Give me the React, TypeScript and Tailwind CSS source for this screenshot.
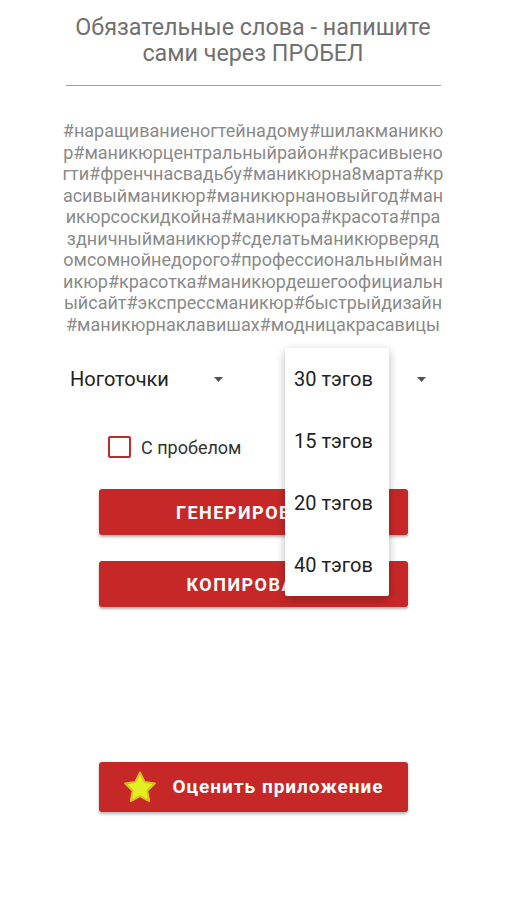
const HASHTAG_LINES = [
  "#наращиваниеногтейнадому#шилакманикю",
  "р#маникюрцентральныйрайон#красивыено",
  "гти#френчнасвадьбу#маникюрна8марта#кр",
  "асивыйманикюр#маникюрнановыйгод#ман",
  "икюрсоскидкойна#маникюра#красота#пра",
  "здничныйманикюр#сделатьманикюрверяд",
  "омсомнойнедорого#профессиональныйман",
  "икюр#красотка#маникюрдешегоофициальн",
  "ыйсайт#экспрессманикюр#быстрыйдизайн",
  "#маникюрнаклавишах#модницакрасавицы",
];

const OPTIONS = ["30 тэгов", "15 тэгов", "20 тэгов", "40 тэгов"];

function Caret() {
  return (
    <svg width="9" height="5" viewBox="0 0 9 5" className="shrink-0">
      <path d="M0 0h9L4.5 5z" fill="#555" />
    </svg>
  );
}

function Star() {
  return (
    <svg width="36" height="34" viewBox="0 0 36 34">
      <path
        d="M18 2.5l4.6 9.4 10.3 1.5-7.5 7.3 1.8 10.3L18 26.1l-9.2 4.9 1.8-10.3-7.5-7.3 10.3-1.5z"
        fill="#e2ef22"
        stroke="#d9c21e"
        strokeWidth="2"
        strokeLinejoin="round"
      />
    </svg>
  );
}

export default function App() {
  return (
    <div
      className="relative w-full min-h-screen bg-white flex flex-col"
      style={{ fontFamily: "Roboto, 'Noto Sans', sans-serif" }}
    >
      {/* header */}
      <div className="pt-[14px] text-center text-[23.3px] leading-[26px] text-[#707070]">
        <div>Обязательные слова - напишите</div>
        <div>сами через ПРОБЕЛ</div>
      </div>
      <div className="mt-[19px] mx-auto w-[375px] h-px bg-[#9e9e9e]" />

      {/* generated tags */}
      <div className="mt-[34px] text-center text-[18px] leading-[21.5px] text-[#8a8a8a]">
        {HASHTAG_LINES.map((l, i) => (
          <div key={i}>{l}</div>
        ))}
      </div>

      {/* spinners */}
      <div className="mt-[19px] flex items-center h-[50px] text-[20px] text-[#222]">
        <div className="ml-[62px] w-[176px] pl-[8px] pr-[15px] flex items-center justify-between">
          <span>Ноготочки</span>
          <Caret />
        </div>
        <div className="ml-[47px] w-[156px] pl-[10px] pr-[15px] flex items-center justify-between">
          <span>30 тэгов</span>
          <Caret />
        </div>
      </div>

      {/* checkbox */}
      <div className="mt-[28px] pl-[108px] flex items-center gap-[10px] h-[30px]">
        <div className="w-[23px] h-[22px] border-2 border-[#c62828] rounded-[2px]" />
        <span className="text-[18px] text-[#333]">С пробелом</span>
      </div>

      {/* actions */}
      <div className="mt-[27px] flex flex-col items-center gap-[26px]">
        <button className="w-[309px] h-[46px] rounded-[3px] bg-[#c62828] text-white font-bold text-[18px] tracking-[1.5px] shadow-[0_2px_3px_rgba(0,0,0,0.3)]">
          ГЕНЕРИРОВАТЬ
        </button>
        <button className="w-[309px] h-[46px] rounded-[3px] bg-[#c62828] text-white font-bold text-[18px] tracking-[1.5px] shadow-[0_2px_3px_rgba(0,0,0,0.3)]">
          КОПИРОВАТЬ
        </button>
      </div>

      <div className="mt-[155px] flex justify-center">
        <button className="w-[309px] h-[50px] rounded-[3px] bg-[#c62828] text-white font-bold text-[19px] tracking-[1px] shadow-[0_2px_3px_rgba(0,0,0,0.3)] flex items-center justify-center gap-[14px]">
          <Star />
          <span>Оценить приложение</span>
        </button>
      </div>

      {/* open spinner menu */}
      <div className="absolute left-[285px] top-[348px] w-[104px] bg-white rounded-[2px] shadow-[0_3px_10px_rgba(0,0,0,0.28)]">
        {OPTIONS.map((o) => (
          <div key={o} className="h-[62px] pl-[9px] flex items-center text-[20px] text-[#222]">
            {o}
          </div>
        ))}
      </div>
    </div>
  );
}
